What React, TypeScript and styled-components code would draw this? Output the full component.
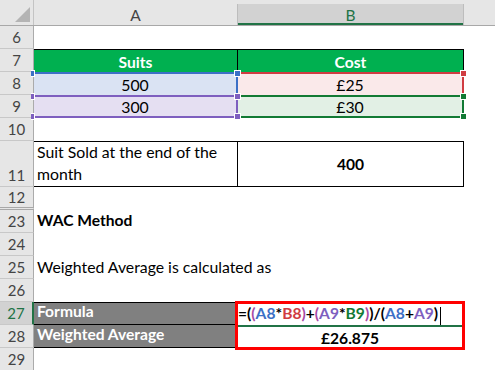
import React from "react";
import styled, { createGlobalStyle } from "styled-components";

const GlobalStyle = createGlobalStyle`
  html, body { margin: 0; padding: 0; background: #fff; }
  body { font-family: Lato, "Liberation Sans", sans-serif; }
  *, *::before, *::after { box-sizing: border-box; }
`;

const C = {
  blue: "#3c70c6",
  red: "#d03c42",
  purple: "#7e5fbf",
  green: "#127a34",
  paren: "#a84aa6",
  xlGreen: "#217346",
};

const REG = 15.8;
const BOLD = 15.6;

const Sheet = styled.div`
  width: 495px;
  height: 370px;
  overflow: hidden;
  display: flex;
  flex-direction: column;
  background: #fff;
`;

const HeaderBar = styled.div`
  display: flex;
  flex: none;
  height: 26px;
  background: #e6e6e6;
  border-bottom: 1px solid #a8a8a8;
`;

const Corner = styled.div`
  width: 34px;
  flex: none;
  border-right: 1px solid #c4c4c4;
  display: flex;
  align-items: flex-end;
  justify-content: flex-end;
  padding: 0 3px 3px 0;
`;

const ColHead = styled.div<{ $w: number; $selected?: boolean }>`
  width: ${(p) => p.$w}px;
  flex: none;
  margin-top: 4px;
  display: flex;
  align-items: center;
  justify-content: center;
  font-size: 15.5px;
  color: ${(p) => (p.$selected ? C.xlGreen : "#444")};
  background: ${(p) => (p.$selected ? "#d2d2d2" : "transparent")};
  border-right: 1px solid #bdbdbd;
  box-shadow: ${(p) => (p.$selected ? `inset 0 -2px 0 ${C.xlGreen}` : "none")};
`;

const Row = styled.div<{ $h?: number }>`
  display: flex;
  flex: none;
  height: ${(p) => p.$h ?? 23}px;
`;

const RowNum = styled.div<{ $active?: boolean; $hidden?: boolean }>`
  width: 34px;
  flex: none;
  align-self: stretch;
  background: ${(p) => (p.$active ? "#d2d2d2" : "#e6e6e6")};
  color: ${(p) => (p.$active ? C.xlGreen : "#444")};
  border-right: ${(p) => (p.$active ? `2px solid ${C.xlGreen}` : "1px solid #ababab")};
  border-bottom: ${(p) => (p.$hidden ? "3px double #a8a8a8" : "1px solid #c8c8c8")};
  display: flex;
  align-items: flex-end;
  justify-content: center;
  padding-bottom: ${(p) => (p.$hidden ? 2 : 3)}px;
  font-size: 15px;
  line-height: 1;
`;

const StackNum = styled(RowNum)`
  height: 23px;
  flex: none;
`;

const TextCell = styled.div<{ $w?: number; $bold?: boolean }>`
  width: ${(p) => (p.$w ? `${p.$w}px` : "auto")};
  flex: ${(p) => (p.$w ? "none" : "1")};
  display: flex;
  align-items: flex-end;
  padding: 0 4px 4px 3px;
  font-size: ${(p) => (p.$bold ? BOLD : REG)}px;
  line-height: 1;
  font-weight: ${(p) => (p.$bold ? 700 : 400)};
  color: #000;
  white-space: nowrap;
`;

const TitleCell = styled.div<{ $w: number }>`
  width: ${(p) => p.$w}px;
  flex: none;
  background: #00b050;
  color: #fff;
  font-weight: 700;
  font-size: ${BOLD}px;
  display: flex;
  align-items: center;
  justify-content: center;
  padding-top: 2px;
  border-top: 1px solid #000;
  border-right: 1px solid #000;
`;

const RangeCell = styled.div<{ $w: number; $c: string; $fill: string; $bottom?: boolean; $left?: boolean }>`
  position: relative;
  width: ${(p) => p.$w}px;
  flex: none;
  background: ${(p) => p.$fill};
  border-top: 2px solid ${(p) => p.$c};
  border-right: 2px solid ${(p) => p.$c};
  border-bottom: ${(p) => (p.$bottom ? `2px solid ${p.$c}` : "none")};
  border-left: ${(p) => (p.$left ? `2px solid ${p.$c}` : "none")};
  display: flex;
  align-items: center;
  justify-content: center;
  font-size: ${REG}px;
  color: #000;
`;

const Handle = styled.span<{ $c: string; $v: "top" | "bottom"; $h: "left" | "right" }>`
  position: absolute;
  z-index: 3;
  ${(p) => p.$v}: -4px;
  ${(p) => p.$h}: ${(p) => (p.$h === "left" ? "-3px" : "-5px")};
  width: ${(p) => (p.$h === "left" ? 4 : 7)}px;
  height: 7px;
  background: ${(p) => p.$c};
  border: 1px solid #fff;
  ${(p) => (p.$h === "left" ? "border-left: none;" : "")}
`;

const BoxCell = styled.div<{ $w: number; $center?: boolean }>`
  width: ${(p) => p.$w}px;
  flex: none;
  border-top: 1px solid #000;
  border-bottom: 1px solid #000;
  border-right: 1px solid #000;
  display: flex;
  align-items: ${(p) => (p.$center ? "center" : "flex-end")};
  justify-content: ${(p) => (p.$center ? "center" : "flex-start")};
  padding: ${(p) => (p.$center ? "0" : "0 4px 1px 3px")};
  font-size: ${(p) => (p.$center ? BOLD : REG)}px;
  line-height: 22px;
  font-weight: ${(p) => (p.$center ? 700 : 400)};
  color: #000;
`;

const Group = styled.div`
  display: flex;
  flex: none;
  height: 46px;
`;

const Stack = styled.div`
  display: flex;
  flex-direction: column;
  flex: none;
`;

const DarkCell = styled.div<{ $first?: boolean }>`
  width: 201px;
  height: 23px;
  background: #808080;
  color: #fff;
  font-weight: 700;
  font-size: ${BOLD}px;
  line-height: 1;
  display: flex;
  align-items: flex-end;
  padding: 0 4px 4px 3px;
  border-top: ${(p) => (p.$first ? "1px solid #000" : "none")};
  border-bottom: 1px solid #000;
`;

const RedBox = styled.div`
  position: relative;
  z-index: 1;
  width: 230px;
  flex: none;
  height: 49px;
  margin-top: -1px;
  margin-bottom: -2px;
  border: 3px solid #ff0000;
  background: #fff;
  display: flex;
  flex-direction: column;
`;

const FormulaCell = styled.div`
  position: relative;
  height: 23px;
  flex: none;
  border-bottom: 2px solid ${C.xlGreen};
  display: flex;
  align-items: flex-end;
  padding: 0 0 3px 0;
  font-size: ${BOLD}px;
  line-height: 1;
  font-weight: 700;
  color: #000;
  white-space: nowrap;
`;

const Ref = styled.span<{ $c: string }>`
  color: ${(p) => p.$c};
`;

const Caret = styled.span`
  display: inline-block;
  width: 1px;
  height: 18px;
  background: #000;
  margin-left: 2px;
  margin-bottom: -3px;
`;

const ResultCell = styled.div`
  flex: 1;
  display: flex;
  align-items: center;
  justify-content: center;
  font-size: ${BOLD}px;
  font-weight: 700;
  color: #000;
  padding-top: 1px;
`;

const CornerTriangle = () => (
  <svg width="15" height="15" viewBox="0 0 15 15">
    <polygon points="15,0 15,15 0,15" fill="#b4b4b4" />
  </svg>
);

const Formula = () => (
  <>
    =(<Ref $c={C.paren}>(</Ref>
    <Ref $c={C.blue}>A8</Ref>*<Ref $c={C.red}>B8</Ref>
    <Ref $c={C.paren}>)</Ref>+<Ref $c={C.paren}>(</Ref>
    <Ref $c={C.purple}>A9</Ref>*<Ref $c={C.green}>B9</Ref>
    <Ref $c={C.paren}>)</Ref>)/(
    <Ref $c={C.blue}>A8</Ref>+<Ref $c={C.purple}>A9</Ref>)
    <Caret />
  </>
);

export default function App() {
  return (
    <>
      <GlobalStyle />
      <Sheet>
        <HeaderBar>
          <Corner>
            <CornerTriangle />
          </Corner>
          <ColHead $w={204}>A</ColHead>
          <ColHead $w={226} $selected>
            B
          </ColHead>
        </HeaderBar>

        <Row>
          <RowNum>6</RowNum>
        </Row>

        <Row>
          <RowNum>7</RowNum>
          <TitleCell $w={204}>Suits</TitleCell>
          <TitleCell $w={226}>Cost</TitleCell>
        </Row>

        <Row>
          <RowNum>8</RowNum>
          <RangeCell $w={204} $c={C.blue} $fill="#dae3f3">
            <Handle $c={C.blue} $v="top" $h="left" />
            <Handle $c={C.blue} $v="top" $h="right" />
            500
          </RangeCell>
          <RangeCell $w={226} $c={C.red} $fill="#fae9ea">
            <Handle $c={C.red} $v="top" $h="right" />
            £25
          </RangeCell>
        </Row>

        <Row>
          <RowNum>9</RowNum>
          <RangeCell $w={204} $c={C.purple} $fill="#e5dff2" $bottom>
            <Handle $c={C.purple} $v="top" $h="left" />
            <Handle $c={C.purple} $v="top" $h="right" />
            <Handle $c={C.purple} $v="bottom" $h="left" />
            <Handle $c={C.purple} $v="bottom" $h="right" />
            300
          </RangeCell>
          <RangeCell $w={226} $c={C.green} $fill="#e2f0e5" $bottom>
            <Handle $c={C.green} $v="top" $h="right" />
            <Handle $c={C.green} $v="bottom" $h="right" />
            £30
          </RangeCell>
        </Row>

        <Row>
          <RowNum>10</RowNum>
        </Row>

        <Row $h={46}>
          <RowNum>11</RowNum>
          <BoxCell $w={204}>Suit Sold at the end of the month</BoxCell>
          <BoxCell $w={226} $center>
            400
          </BoxCell>
        </Row>

        <Row>
          <RowNum $hidden>12</RowNum>
        </Row>

        <Row>
          <RowNum>23</RowNum>
          <TextCell $bold>WAC Method</TextCell>
        </Row>

        <Row>
          <RowNum>24</RowNum>
        </Row>

        <Row>
          <RowNum>25</RowNum>
          <TextCell>Weighted Average is calculated as</TextCell>
        </Row>

        <Row>
          <RowNum>26</RowNum>
        </Row>

        <Group>
          <Stack>
            <StackNum $active>27</StackNum>
            <StackNum>28</StackNum>
          </Stack>
          <Stack>
            <DarkCell $first>Formula</DarkCell>
            <DarkCell>Weighted Average</DarkCell>
          </Stack>
          <RedBox>
            <FormulaCell>
              <Formula />
            </FormulaCell>
            <ResultCell>£26.875</ResultCell>
          </RedBox>
        </Group>

        <Row>
          <RowNum>29</RowNum>
        </Row>
      </Sheet>
    </>
  );
}
